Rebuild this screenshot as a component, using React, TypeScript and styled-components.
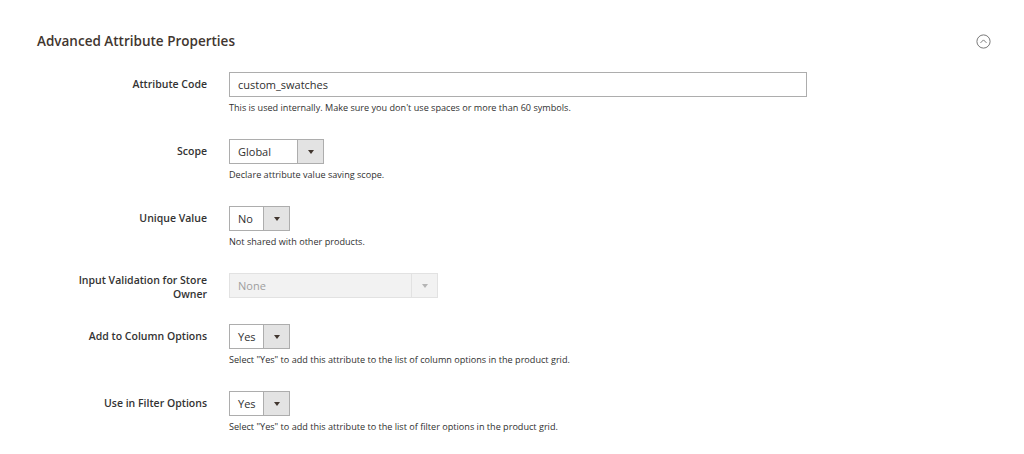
import { ReactElement } from 'react';
import styled, { createGlobalStyle } from 'styled-components';

const GlobalStyle = createGlobalStyle`
  html, body {
    margin: 0;
    padding: 0;
    background: #fff;
  }
  body {
    font-family: 'Open Sans', 'Liberation Sans', sans-serif;
    color: #303030;
  }
`;

const Section = styled.section`
  width: 1024px;
  padding: 32px 33px 0 37px;
  box-sizing: border-box;
`;

const Header = styled.header`
  display: flex;
  justify-content: space-between;
  align-items: center;
  height: 18px;
`;

const Title = styled.h2`
  margin: 0;
  font-size: 13.5px;
  line-height: 18px;
  font-weight: 600;
  color: #41362f;
`;

const Toggle = styled.button`
  display: flex;
  padding: 0;
  border: 0;
  background: none;
  cursor: pointer;
`;

const Form = styled.div`
  display: flex;
  flex-direction: column;
  margin-top: 22px;
`;

const Field = styled.div`
  display: grid;
  grid-template-columns: 170px 1fr;
  align-items: start;
  column-gap: 22px;
  margin-bottom: 25px;
`;

const Label = styled.label<{ $wrap?: boolean }>`
  justify-self: end;
  max-width: ${(p) => (p.$wrap ? '135px' : 'none')};
  padding-top: ${(p) => (p.$wrap ? 0 : 5)}px;
  margin-bottom: ${(p) => (p.$wrap ? -2 : 0)}px;
  font-size: 10.5px;
  line-height: 14px;
  font-weight: 600;
  text-align: right;
  color: #333;
`;

const Control = styled.div`
  display: flex;
  flex-direction: column;
  align-items: flex-start;
`;

const TextInput = styled.input`
  box-sizing: border-box;
  width: 578px;
  height: 25px;
  padding: 0 8px;
  border: 1px solid #adadad;
  font-family: inherit;
  font-size: 11px;
  color: #303030;
  outline: none;
`;

const Select = styled.div<{ $width: number; $disabled?: boolean }>`
  box-sizing: border-box;
  display: flex;
  width: ${(p) => p.$width}px;
  height: 25px;
  border: 1px solid ${(p) => (p.$disabled ? '#e2e2e2' : '#adadad')};
  background: ${(p) => (p.$disabled ? '#f2f2f2' : '#fff')};
`;

const SelectValue = styled.span<{ $disabled?: boolean }>`
  flex: 1;
  padding-left: 8px;
  font-size: 11px;
  line-height: 23px;
  color: ${(p) => (p.$disabled ? '#9e9e9e' : '#303030')};
`;

const SelectButton = styled.span<{ $disabled?: boolean }>`
  display: flex;
  align-items: center;
  justify-content: center;
  width: 25px;
  border-left: 1px solid ${(p) => (p.$disabled ? '#e2e2e2' : '#adadad')};
  background: ${(p) => (p.$disabled ? '#f2f2f2' : '#e3e3e3')};
`;

const Arrow = styled.span<{ $disabled?: boolean }>`
  width: 0;
  height: 0;
  border-left: 3px solid transparent;
  border-right: 3px solid transparent;
  border-top: 4px solid ${(p) => (p.$disabled ? '#b5b5b5' : '#41362f')};
`;

const Note = styled.div`
  margin-top: 4px;
  font-size: 9.1px;
  line-height: 13px;
  color: #303030;
`;

type Row = {
  label: string;
  wrap?: boolean;
  note?: string;
  kind: 'text' | 'select';
  value: string;
  width?: number;
  disabled?: boolean;
};

const rows: Row[] = [
  {
    label: 'Attribute Code',
    kind: 'text',
    value: 'custom_swatches',
    note: "This is used internally. Make sure you don't use spaces or more than 60 symbols.",
  },
  { label: 'Scope', kind: 'select', value: 'Global', width: 95, note: 'Declare attribute value saving scope.' },
  { label: 'Unique Value', kind: 'select', value: 'No', width: 61, note: 'Not shared with other products.' },
  { label: 'Input Validation for Store Owner', wrap: true, kind: 'select', value: 'None', width: 209, disabled: true },
  {
    label: 'Add to Column Options',
    kind: 'select',
    value: 'Yes',
    width: 61,
    note: 'Select "Yes" to add this attribute to the list of column options in the product grid.',
  },
  {
    label: 'Use in Filter Options',
    kind: 'select',
    value: 'Yes',
    width: 61,
    note: 'Select "Yes" to add this attribute to the list of filter options in the product grid.',
  },
];

function CollapseIcon(): ReactElement {
  return (
    <svg width="15" height="15" viewBox="0 0 15 15" fill="none">
      <circle cx="7.5" cy="7.5" r="6.6" stroke="#6b6b6b" strokeWidth="0.9" />
      <path d="M4.8 8.6 L7.5 5.9 L10.2 8.6" stroke="#6b6b6b" strokeWidth="0.9" strokeLinecap="round" />
    </svg>
  );
}

export default function App(): ReactElement {
  return (
    <>
      <GlobalStyle />
      <Section>
        <Header>
          <Title>Advanced Attribute Properties</Title>
          <Toggle aria-label="Collapse">
            <CollapseIcon />
          </Toggle>
        </Header>

        <Form>
          {rows.map((row) => (
            <Field key={row.label}>
              <Label $wrap={row.wrap}>{row.label}</Label>
              <Control>
                {row.kind === 'text' ? (
                  <TextInput defaultValue={row.value} />
                ) : (
                  <Select $width={row.width ?? 61} $disabled={row.disabled}>
                    <SelectValue $disabled={row.disabled}>{row.value}</SelectValue>
                    <SelectButton $disabled={row.disabled}>
                      <Arrow $disabled={row.disabled} />
                    </SelectButton>
                  </Select>
                )}
                {row.note && <Note>{row.note}</Note>}
              </Control>
            </Field>
          ))}
        </Form>
      </Section>
    </>
  );
}
